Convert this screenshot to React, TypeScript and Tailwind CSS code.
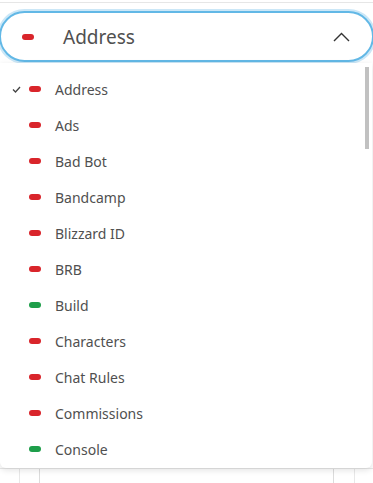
import React from "react";

type Item = { label: string; on: boolean };

const items: Item[] = [
  { label: "Address", on: false },
  { label: "Ads", on: false },
  { label: "Bad Bot", on: false },
  { label: "Bandcamp", on: false },
  { label: "Blizzard ID", on: false },
  { label: "BRB", on: false },
  { label: "Build", on: true },
  { label: "Characters", on: false },
  { label: "Chat Rules", on: false },
  { label: "Commissions", on: false },
  { label: "Console", on: true },
];

const Pill: React.FC<{ on: boolean }> = ({ on }) => (
  <span
    className={`block w-[12px] h-[6px] rounded-full ${on ? "bg-[#1e9e4a]" : "bg-[#d9252b]"}`}
  />
);

export default function App() {
  return (
    <div
      className="relative w-[373px] h-[483px] overflow-hidden bg-white text-[#505050]"
      style={{ fontFamily: '"Noto Sans", "Open Sans", sans-serif' }}
    >
      <div className="h-[3px] border-b border-[#e6e6e6]" />

      {/* background table lines */}
      <div className="absolute left-0 right-0 top-[468px] bottom-0 flex border-t border-[#e8e8e8]">
        <div className="w-[20px] border-r border-[#e8e8e8]" />
        <div className="w-[20px] border-r border-[#dcdcdc]" />
        <div className="flex-1 border-r border-[#dcdcdc]" />
        <div className="w-[21px] border-r border-[#e8e8e8]" />
        <div className="w-[18px]" />
      </div>

      <div className="pt-[8px]">
        <div className="mx-[-1px] h-[51px] rounded-[26px] border-2 border-[#62b8e6] shadow-[0_0_0_2px_#cbe7f7] bg-white flex items-center pl-[21px] pr-[22px]">
          <Pill on={false} />
          <span className="ml-[29px] mt-[2px] text-[19px] leading-none text-[#505050]">Address</span>
          <svg className="ml-auto" width="17" height="10" viewBox="0 0 17 10" fill="none">
            <path d="M1 9 L8.5 1.5 L16 9" stroke="#333" strokeWidth="1.4" />
          </svg>
        </div>
      </div>

      <div className="absolute left-0 right-[1px] top-[63px] h-[405px] bg-white rounded-b-[6px] shadow-[0_2px_6px_rgba(0,0,0,0.12)] pt-[8px]">
        <div className="absolute right-[3px] top-[4px] w-[4px] h-[82px] bg-[#c1c1c1]" />
        {items.map((it, i) => (
          <div key={it.label} className="h-[36px] flex items-center">
            <span className="w-[29px] flex justify-end pr-[8px]">
              {i === 0 && (
                <svg width="9" height="7" viewBox="0 0 9 7" fill="none">
                  <path d="M1 3.5 L3.5 6 L8 1" stroke="#444" strokeWidth="1.3" />
                </svg>
              )}
            </span>
            <Pill on={it.on} />
            <span className="ml-[14px] mt-[1px] text-[14px] leading-none">{it.label}</span>
          </div>
        ))}
      </div>
    </div>
  );
}
